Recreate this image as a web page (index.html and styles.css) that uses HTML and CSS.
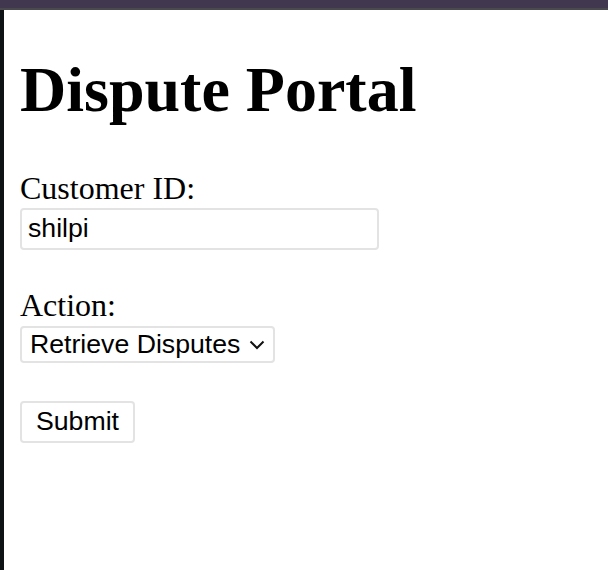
FILE: index.html
```html
<!DOCTYPE html>
<html lang="en">
<head>
<meta charset="utf-8">
<title>Dispute Portal</title>
<link rel="stylesheet" href="styles.css">
</head>
<body>
<div class="topbar"></div>
<div class="frame">
  <div class="edge"></div>
  <main class="content">
    <h1 class="title">Dispute Portal</h1>
    <form class="form">
      <label class="label" for="cid">Customer ID:</label>
      <input class="input" id="cid" type="text" value="shilpi">
      <label class="label" for="action">Action:</label>
      <span class="select-wrap">
        <select class="select" id="action">
          <option>Retrieve Disputes</option>
        </select>
        <svg class="chevron" width="16" height="10" viewBox="0 0 16 10"><path d="M1.5 1.5 L8 8 L14.5 1.5" fill="none" stroke="#111" stroke-width="2"/></svg>
      </span>
      <button class="button" type="button">Submit</button>
    </form>
  </main>
</div>
</body>
</html>
```
FILE: styles.css
```css
html, body {
  margin: 0;
  padding: 0;
  background: #fff;
}
body {
  font-family: "Liberation Serif", "Times New Roman", serif;
  color: #000;
}
.topbar {
  height: 8px;
  background: #41384f;
  border-bottom: 2px solid #4a4a4e;
}
.frame {
  display: flex;
  min-height: calc(100vh - 10px);
}
.edge {
  width: 4px;
  background: #0f1214;
  flex: none;
}
.content {
  flex: 1;
  padding-left: 16px;
}
.title {
  font-size: 64px;
  font-weight: bold;
  margin: 42.88px 0;
  line-height: normal;
}
.form {
  display: flex;
  flex-direction: column;
  align-items: flex-start;
}
.label {
  font-size: 32px;
  line-height: normal;
}
.input, .select, .button {
  font-family: "Liberation Sans", Arial, sans-serif;
  font-size: 26.67px;
  color: #000;
  background: #fff;
  border: 2px solid #e3e3e3;
  border-radius: 4px;
  box-sizing: border-box;
  margin: 0;
}
.input {
  width: 359px;
  height: 42px;
  padding: 0 6px;
  margin-top: 1px;
  margin-bottom: 37px;
}
.select-wrap {
  position: relative;
  display: inline-block;
  margin-top: 2px;
  margin-bottom: 38px;
}
.select {
  appearance: none;
  -webkit-appearance: none;
  width: 255px;
  height: 37px;
  padding: 0 0 0 8px;
  display: block;
}
.chevron {
  position: absolute;
  left: 229px;
  top: 14px;
  pointer-events: none;
}
.button {
  width: 115px;
  height: 42px;
  padding: 0;
  text-align: center;
}
```
